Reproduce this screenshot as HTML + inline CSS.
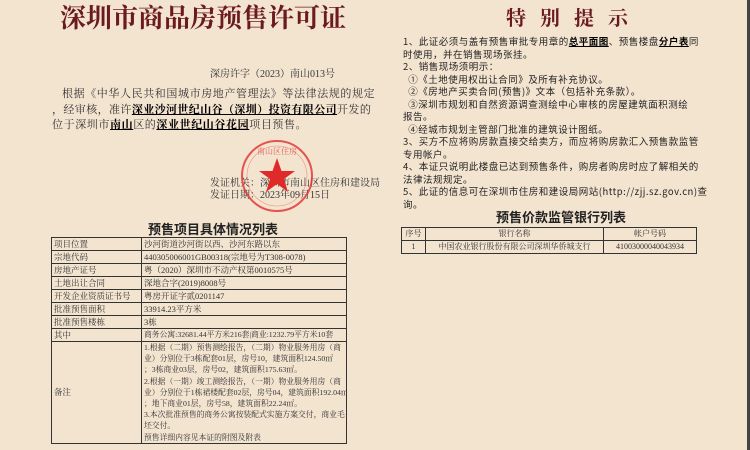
<!DOCTYPE html>
<html><head><meta charset="utf-8"><style>
*{margin:0;padding:0;box-sizing:border-box}
body{width:750px;height:450px;background:#f3e4d0;position:relative;overflow:hidden;font-family:"Liberation Serif","Noto Serif CJK SC",serif;color:#333}
.a{position:absolute;white-space:nowrap}
.t1{left:60px;top:-2px;font-size:26px;font-weight:bold;color:#6b1a1f}
.p{font-size:11px;color:#333}
u{font-weight:bold;color:#000}
table{position:absolute;border-collapse:collapse;font-size:8.5px;color:#333;table-layout:fixed}
td{border:1.5px solid #333;padding:0 2px;height:13px;line-height:10px;white-space:nowrap;overflow:hidden}
.r{font-family:"Noto Sans CJK SC","Liberation Sans",sans-serif;font-size:9.5px;line-height:12.5px;color:#222;letter-spacing:0.5px}
</style></head><body>
<div class="a t1">深圳市商品房预售许可证</div>
<div class="a p" style="left:210px;top:65px;font-size:10px">深房许字（2023）南山013号</div>
<div class="a p" style="left:62px;top:85px;letter-spacing:0.6px">根据《中华人民共和国城市房地产管理法》等法律法规的规定</div>
<div class="a p" style="left:52px;top:101px;letter-spacing:0.4px">，经审核，准许<u>深业沙河世纪山谷（深圳）投资有限公司</u>开发的</div>
<div class="a p" style="left:52px;top:116px;letter-spacing:0.6px">位于深圳市<u>南山</u>区的<u>深业世纪山谷花园</u>项目预售。</div>
<div class="a p" style="left:210px;top:174px;font-size:10px">发证机关：深圳市南山区住房和建设局</div>
<div class="a p" style="left:210px;top:186px;font-size:10px">发证日期：2023年09月15日</div>
<svg class="a" style="left:238px;top:137px" width="78" height="78"><circle cx="39" cy="39" r="35" fill="none" stroke="#e23a3a" stroke-width="2" opacity=".85"/><circle cx="39" cy="39" r="30" fill="none" stroke="#e23a3a" stroke-width="0.6" opacity=".5"/><polygon points="39,21 43.5,34 57,34 46,42 50,55 39,47 28,55 32,42 21,34 34.5,34" fill="#e02a2a"/><text x="39" y="17" font-size="8" fill="#e23a3a" text-anchor="middle" opacity=".8">南山区住房</text></svg>
<div class="a" style="left:148px;top:219px;font-size:13px;font-weight:bold;font-family:'Noto Sans CJK SC',sans-serif;color:#222">预售项目具体情况列表</div>
<table style="left:51px;top:237px;width:296px">
<tr><td style="width:90px">项目位置</td><td>沙河街道沙河街以西、沙河东路以东</td></tr>
<tr><td>宗地代码</td><td>440305006001GB00318(宗地号为T308-0078)</td></tr>
<tr><td>房地产证号</td><td>粤（2020）深圳市不动产权第0010575号</td></tr>
<tr><td>土地出让合同</td><td>深地合字(2019)8008号</td></tr>
<tr><td>开发企业资质证书号</td><td>粤房开证字贰0201147</td></tr>
<tr><td>批准预售面积</td><td>33914.23平方米</td></tr>
<tr><td>批准预售楼栋</td><td>3栋</td></tr>
<tr><td>其中</td><td style="font-size:7.8px">商务公寓:32681.44平方米216套|商业:1232.79平方米10套</td></tr>
<tr><td>备注</td><td style="height:92px;line-height:11.2px;font-size:7.8px">1.根据（二期）预售测绘报告，（二期）物业服务用房（商<br>业）分别位于3栋配套01层，房号10，建筑面积124.50㎡<br>；3栋商业03层，房号02，建筑面积175.63㎡。<br>2.根据（一期）竣工测绘报告，（一期）物业服务用房（商<br>业）分别位于1栋裙楼配套02层，房号04，建筑面积192.04㎡<br>；地下商业01层，房号58，建筑面积22.24㎡。<br>3.本次批准预售的商务公寓按装配式实施方案交付，商业毛<br>坯交付。<br>预售详细内容见本证的附图及附表</td></tr>
</table>
<div class="a" style="left:506px;top:2px;font-size:20px;font-weight:bold;color:#6b1a1f;letter-spacing:14px">特别提示</div>
<div class="a r" style="left:403px;top:35px">1、此证必须与盖有预售审批专用章的<u>总平面图</u>、预售楼盘<u>分户表</u>同<br>时使用，并在销售现场张挂。<br>2、销售现场须明示：<br>&nbsp;&nbsp;①《土地使用权出让合同》及所有补充协议。<br>&nbsp;&nbsp;②《房地产买卖合同(预售)》文本（包括补充条款）。<br>&nbsp;&nbsp;③深圳市规划和自然资源调查测绘中心审核的房屋建筑面积测绘<br>报告。<br>&nbsp;&nbsp;④经城市规划主管部门批准的建筑设计图纸。<br>3、买方不应将购房款直接交给卖方，而应将购房款汇入预售款监管<br>专用帐户。<br>4、本证只说明此楼盘已达到预售条件，购房者购房时应了解相关的<br>法律法规规定。<br>5、此证的信息可在深圳市住房和建设局网站(http://zjj.sz.gov.cn)查<br>询。</div>
<div class="a" style="left:496px;top:207px;font-size:13px;font-weight:bold;font-family:'Noto Sans CJK SC',sans-serif;color:#222">预售价款监管银行列表</div>
<table style="left:401px;top:227px;width:296px;text-align:center;font-size:8px">
<tr><td style="width:24px;padding:0">序号</td><td style="width:178px">银行名称</td><td>帐户号码</td></tr>
<tr><td style="padding:0">1</td><td>中国农业银行股份有限公司深圳华侨城支行</td><td>41003000040043934</td></tr>
</table>
<div class="a" style="left:747px;top:0;width:3px;height:450px;background:#444"></div>
</body></html>
